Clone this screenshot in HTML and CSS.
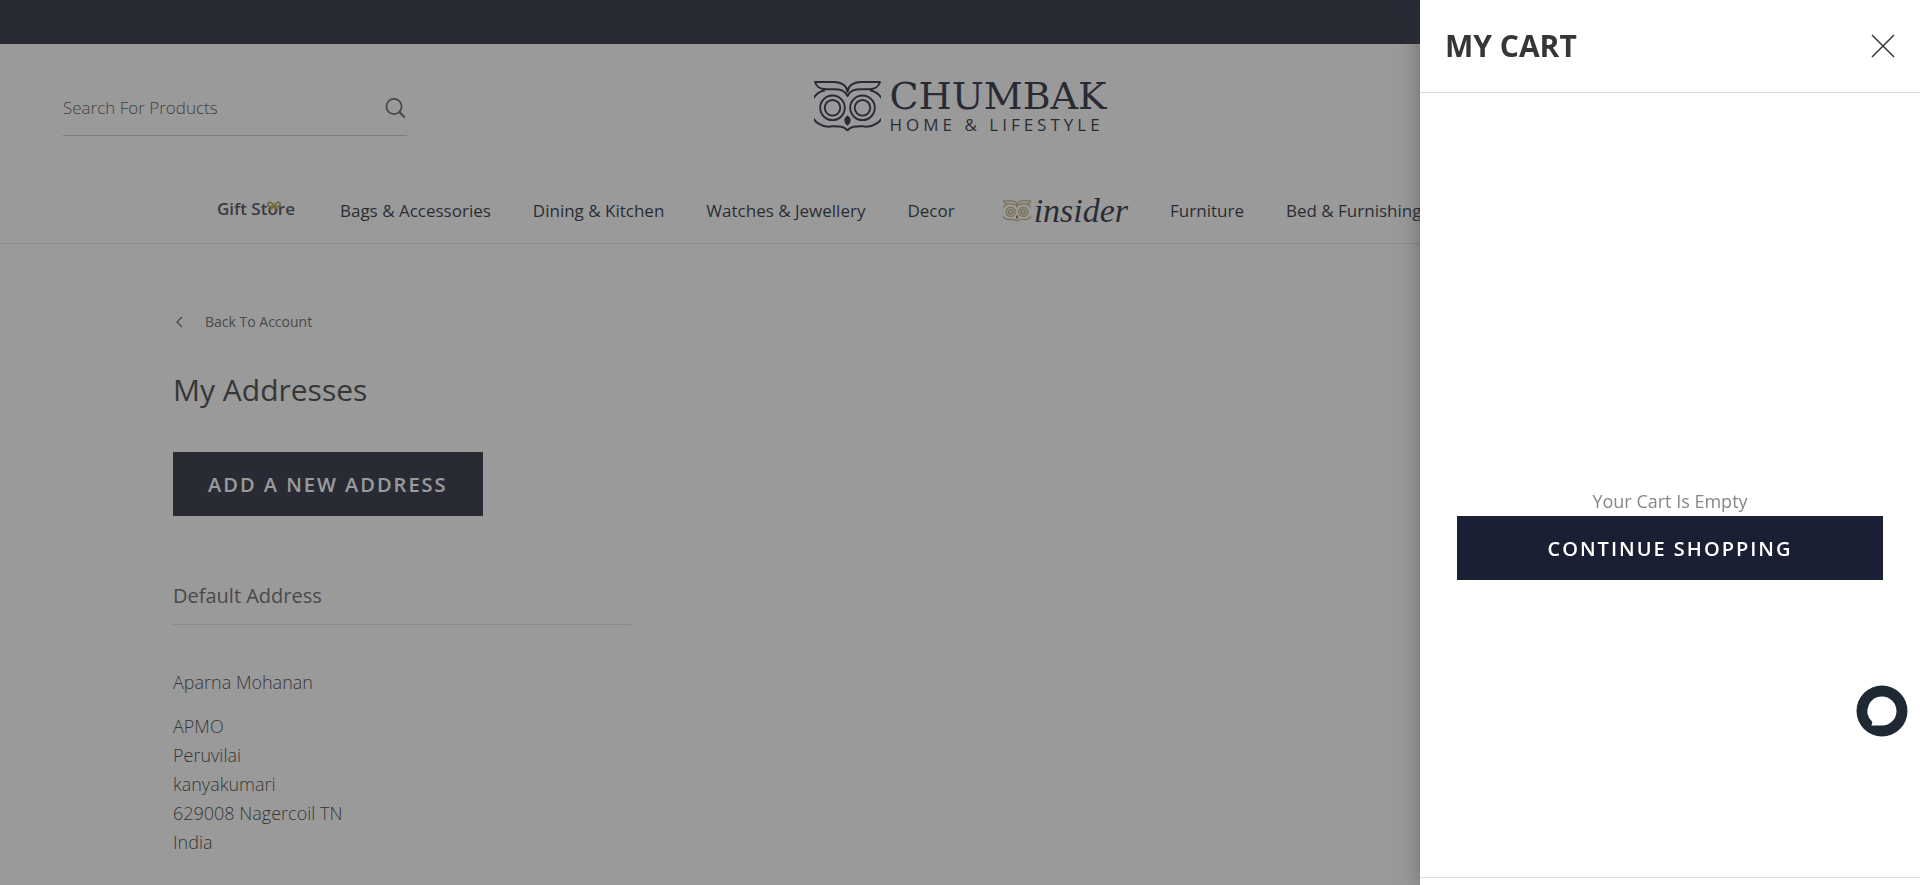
FILE: index.html
```html
<!DOCTYPE html>
<html lang="en">
<head>
<meta charset="utf-8">
<title>My Addresses - Chumbak</title>
<link rel="stylesheet" href="styles.css">
</head>
<body>
<div class="page">
  <div class="announcement"></div>
  <header class="header">
    <div class="header-top">
      <form class="search">
        <input class="search-input" type="text" aria-label="Search For Products" placeholder="Search For Products">
        <button class="search-button" type="button" aria-label="Search">
          <svg width="22" height="22" viewBox="0 0 22 22" fill="none" stroke="#5c5c5c" stroke-width="1.8"><circle cx="9" cy="9.500" r="7.600"/><path d="M14.200 14.900l5.600 5.600" stroke-width="2.200"/></svg>
        </button>
      </form>
      <a class="logo" href="#" aria-label="Chumbak Home &amp; Lifestyle">
        <svg width="67" height="52" viewBox="0 0 67 52" fill="none" stroke="#1a1f33" stroke-width="1.900" stroke-linejoin="round">
          <path d="M33.500 16C31 10.500 27 9.200 20 9.200H12C6 9.200 2 6 1 2H20C28 2 33 6 33.500 12C34 6 39 2 47 2H66C65 6 61 9.200 55 9.200H47C40 9.200 36 10.500 33.500 16Z"/>
          <path d="M11 10.200A18.300 18.300 0 0 0 18.500 46.300C25 46.300 30 46 33.500 50.300C37 46 42 46.300 48.500 46.300A18.300 18.300 0 0 0 56 10.200"/>
          <circle cx="18.500" cy="27.800" r="12.300"/><circle cx="18.500" cy="27.800" r="7.800"/>
          <circle cx="48.500" cy="27.800" r="12.300"/><circle cx="48.500" cy="27.800" r="7.800"/>
          <path d="M33.500 36.500C30.500 38.500 30.500 41.500 33.500 44.500C36.500 41.500 36.500 38.500 33.500 36.500Z" fill="#1a1f33"/>
        </svg>
        <span class="logo-text"><span class="logo-name">CHUMBAK</span><span class="logo-tag">HOME &amp; LIFESTYLE</span></span>
      </a>
    </div>
    <nav class="nav">
      <a class="gift" href="#">Gift Store
        <svg class="gift-bow" width="14" height="12" viewBox="0 0 14 12" fill="none" stroke="#b39a50" stroke-width="1.900"><path d="M7 5C5 1 1 0 1 3S4 6 7 5C9 1 13 0 13 3S10 6 7 5L3 9M7 5l4 4"/></svg>
      </a>
      <a href="#">Bags &amp; Accessories</a>
      <a href="#">Dining &amp; Kitchen</a>
      <a href="#">Watches &amp; Jewellery</a>
      <a href="#">Decor</a>
      <a class="insider" href="#">
        <svg width="28" height="22" viewBox="0 0 67 52" fill="none" stroke="#c0ac74" stroke-width="3">
          <path d="M33.500 16C31 10.500 27 9.200 20 9.200H12C6 9.200 2 6 1 2H20C28 2 33 6 33.500 12C34 6 39 2 47 2H66C65 6 61 9.200 55 9.200H47C40 9.200 36 10.500 33.500 16Z"/>
          <path d="M11 10.200A18.300 18.300 0 0 0 18.500 46.300C25 46.300 30 46 33.500 50.300C37 46 42 46.300 48.500 46.300A18.300 18.300 0 0 0 56 10.200"/>
          <circle cx="18.500" cy="27.800" r="11" fill="#ece6d4"/><circle cx="18.500" cy="27.800" r="5"/>
          <circle cx="48.500" cy="27.800" r="11" fill="#ece6d4"/><circle cx="48.500" cy="27.800" r="5"/>
          <path d="M33.500 37v7" stroke="#8a6d1c" stroke-width="5"/>
        </svg>
        <span>insider</span>
      </a>
      <a href="#">Furniture</a>
      <a href="#">Bed &amp; Furnishings</a>
    </nav>
  </header>
  <main class="content">
    <a class="back" href="#"><svg width="12" height="12" viewBox="0 0 12 12" fill="none" stroke="#5c5c5c" stroke-width="1.300"><path d="M9 1L4 6l5 5"/></svg>Back To Account</a>
    <h1 class="title">My Addresses</h1>
    <button class="button add" type="button">ADD A NEW ADDRESS</button>
    <section class="address">
      <h2 class="address-title">Default Address</h2>
      <p class="address-name">Aparna Mohanan</p>
      <p class="address-lines">APMO<br>Peruvilai<br>kanyakumari<br>629008 Nagercoil TN<br>India</p>
    </section>
  </main>
</div>
<div class="overlay"></div>
<aside class="drawer" aria-label="My cart">
  <div class="drawer-head">
    <h2 class="drawer-title">MY CART</h2>
    <button class="close" type="button" aria-label="Close cart"><svg width="24" height="24" viewBox="0 0 24 24" fill="none" stroke="#363636" stroke-width="1.500"><path d="M1 1l22 22M23 1L1 23"/></svg></button>
  </div>
  <div class="drawer-body">
    <p class="empty">Your Cart Is Empty</p>
    <button class="button continue" type="button">CONTINUE SHOPPING</button>
  </div>
  <div class="drawer-foot"></div>
</aside>
<button class="chat" type="button" aria-label="Chat"><svg width="52" height="52" viewBox="0 0 52 52"><circle cx="26" cy="26" r="25.500" fill="#1f2933"/><path d="M26 11.500a14.500 14.500 0 1 1 0 29H15.500C15.700 38.500 17 38 15.800 36.300A14.500 14.500 0 0 1 26 11.500Z" fill="#fff"/></svg></button>
</body>
</html>
```
FILE: styles.css
```css
* { box-sizing: border-box; }
body {
  margin: 0;
  height: 100vh;
  overflow: hidden;
  background: #fff;
  color: #363636;
  font-family: "Open Sans", sans-serif;
  font-size: 18px;
}
h1, h2, p { margin: 0; }
a { color: inherit; text-decoration: none; }
button { border: 0; padding: 0; background: none; font-family: inherit; cursor: pointer; }
svg { display: block; flex: none; }

.announcement { height: 44px; background: #1a1f33; }
.header { border-bottom: 1px solid #dedede; }
.header-top {
  display: grid;
  grid-template-columns: 1fr auto 1fr;
  align-items: start;
  padding: 36px 63px 0;
}
.search {
  display: flex;
  align-items: center;
  width: 344px;
  height: 56px;
  border-bottom: 1px solid #c4c4c4;
}
.search-input {
  flex: 1;
  min-width: 0;
  padding: 0;
  border: 0;
  outline: 0;
  background: none;
  color: #5c5c5c;
  font: 300 17px "Open Sans", sans-serif;
}
.search-input::placeholder { color: #4a4a4a; opacity: 1; }
.logo { display: flex; gap: 9px; color: #1a1f33; }
.logo-text { display: flex; flex-direction: column; }
.logo-name { font: 38px/32px "DejaVu Serif", serif; }
.logo-tag { font-size: 17px; line-height: 26px; letter-spacing: 4px; }

.nav {
  display: flex;
  align-items: center;
  gap: 42px;
  height: 65px;
  margin-top: 40px;
  padding-left: 217px;
  color: #1a1f33;
  font-size: 17px;
  white-space: nowrap;
}
.gift { position: relative; margin-right: 3px; padding-bottom: 4px; font-weight: 600; color: #3c4054; }
.gift-bow { position: absolute; left: 50px; top: 4px; }
.insider { display: flex; align-items: center; gap: 3px; margin-left: 6px; }
.insider span { font: italic 34px/40px "Liberation Serif", serif; }

.content { padding: 66px 173px 0; }
.back { display: flex; align-items: center; gap: 20px; font-size: 14px; line-height: 24px; color: #5c5c5c; }
.title { margin-top: 32px; font-size: 30px; font-weight: 500; line-height: 48px; }
.button {
  height: 64px;
  background: #1a1f33;
  color: #fff;
  font-size: 20px;
  font-weight: 600;
  letter-spacing: 2px;
}
.add { margin-top: 38px; padding: 0 35px; }
.address { width: 458px; margin-top: 62px; }
.address-title {
  padding-bottom: 10px;
  border-bottom: 1px solid #dedede;
  color: #5c5c5c;
  font-size: 20px;
  font-weight: 500;
  line-height: 36px;
}
.address-name { margin-top: 43px; font-weight: 300; line-height: 29px; }
.address-lines { margin-top: 15px; font-weight: 300; line-height: 29px; }

.overlay { position: fixed; inset: 0; background: rgba(54, 54, 54, .5); }
.drawer {
  position: fixed;
  top: 0;
  right: 0;
  bottom: 0;
  display: flex;
  flex-direction: column;
  width: 500px;
  background: #fff;
  box-shadow: 0 0 20px rgba(54, 54, 54, .5);
}
.drawer-head {
  display: flex;
  align-items: center;
  justify-content: space-between;
  height: 93px;
  padding: 0 25px;
  border-bottom: 1px solid #dedede;
}
.drawer-title { font-size: 30px; font-weight: 700; line-height: 40px; }
.drawer-body {
  flex: 1;
  display: flex;
  flex-direction: column;
  justify-content: center;
  padding: 96px 37px 0;
  text-align: center;
}
.empty { color: #868686; font-weight: 500; line-height: 30px; }
.drawer-foot { height: 8px; border-top: 1px solid #dedede; }
.chat { position: fixed; right: 12px; bottom: 148px; }
```
